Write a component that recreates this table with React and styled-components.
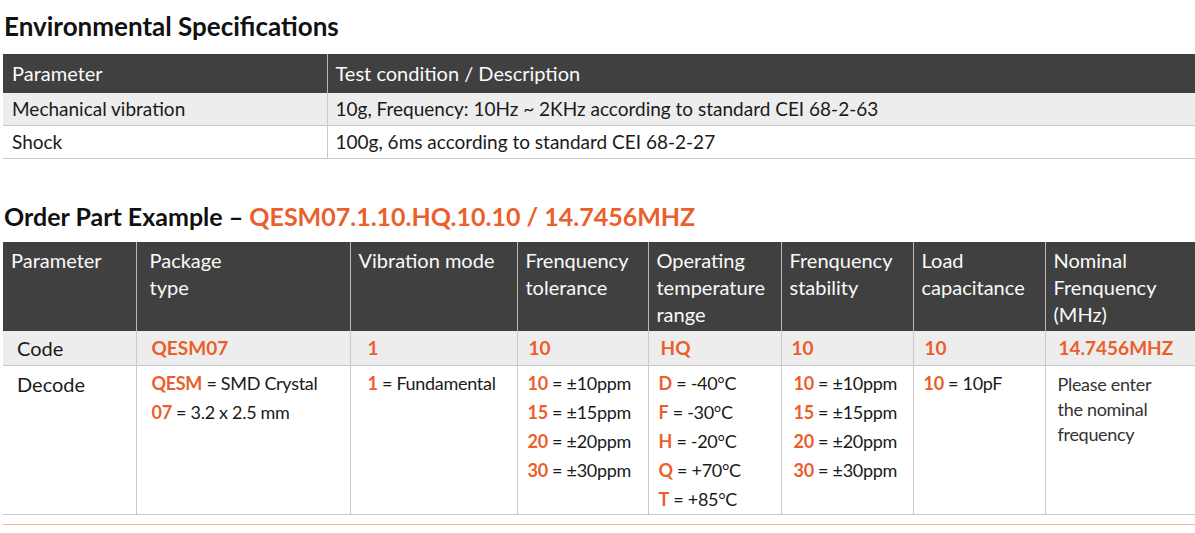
import styled, { createGlobalStyle } from "styled-components";

const GlobalStyle = createGlobalStyle`
  body {
    margin: 0;
    background: #ffffff;
    font-family: Lato, "Open Sans", sans-serif;
    color: #1a1a1a;
  }
`;

const Page = styled.div`
  padding: 9px 0 0 3px;
`;

const Title = styled.h2`
  margin: 0 0 ${({ $below }) => $below || 10}px 1px;
  font-size: ${({ $size }) => $size || 26}px;
  font-weight: 700;
  line-height: 34px;
  color: #111;
`;

const Accent = styled.span`
  color: #ea5f2b;
  font-weight: ${({ $bold }) => ($bold ? 700 : "inherit")};
`;

const Table = styled.table`
  width: 1192px;
  border-collapse: collapse;
  table-layout: fixed;
  margin-bottom: ${({ $gap }) => $gap || 0}px;
`;

const Head = styled.th`
  background: #404040;
  color: #fafafa;
  font-weight: 400;
  font-size: 20px;
  text-align: left;
  vertical-align: top;
  line-height: 27px;
  padding: ${({ $pad }) => $pad || "5px 8px 3px"};
  border-left: 1px solid #b8b8b8;
  &:first-child {
    border-left: none;
  }
`;

const Row = styled.tr`
  background: ${({ $shaded }) => ($shaded ? "#ededed" : "#ffffff")};
  border-bottom: 1px solid #c9c9c9;
`;

const Cell = styled.td`
  font-size: ${({ $size }) => $size || 19}px;
  line-height: ${({ $lh }) => $lh || 32}px;
  height: ${({ $h }) => $h || "auto"};
  padding: ${({ $pad }) => $pad || "0 8px"};
  vertical-align: top;
  color: #1a1a1a;
  font-weight: ${({ $bold }) => ($bold ? 700 : 400)};
  border-left: 1px solid #c9c9c9;
  &:first-child {
    border-left: none;
  }
`;

const Lines = styled.div`
  display: flex;
  flex-direction: column;
  font-size: 18px;
  line-height: 29px;
  letter-spacing: -0.3px;
  padding-top: 3px;
`;

const Note = styled.div`
  font-size: 18px;
  line-height: 25px;
  color: #333;
  letter-spacing: -0.3px;
  padding-top: 6px;
`;

const BottomRule = styled.div`
  width: 1192px;
  height: 1px;
  margin-top: 9px;
  background: #e9b79f;
`;

const envRows = [
  ["Mechanical vibration", "10g, Frequency: 10Hz ~ 2KHz according to standard CEI 68-2-63"],
  ["Shock", "100g, 6ms according to standard CEI 68-2-27"],
];

const cols = [
  { w: 133, head: "Parameter" },
  { w: 214, head: "Package\ntype", pad: "5px 8px 3px 13px" },
  { w: 167, head: "Vibration mode" },
  { w: 131, head: "Frenquency\ntolerance" },
  { w: 133, head: "Operating\ntemperature\nrange" },
  { w: 132, head: "Frenquency\nstability" },
  { w: 132, head: "Load\ncapacitance" },
  { w: 150, head: "Nominal\nFrenquency\n(MHz)" },
];

const codes = [
  { v: "QESM07", pad: "0 10px 0 15px" },
  { v: "1", pad: "0 10px 0 17px" },
  { v: "10", pad: "0 10px 0 11px" },
  { v: "HQ", pad: "0 10px 0 12px" },
  { v: "10", pad: "0 10px 0 10px" },
  { v: "10", pad: "0 10px 0 11px" },
  { v: "14.7456MHZ", pad: "0 8px 0 13px" },
];

const decodes = [
  { pad: "0 10px 0 15px", items: [["QESM", "SMD Crystal"], ["07", "3.2 x 2.5 mm"]] },
  { pad: "0 10px 0 17px", items: [["1", "Fundamental"]] },
  { pad: "0 8px 0 10px", items: [["10", "±10ppm"], ["15", "±15ppm"], ["20", "±20ppm"], ["30", "±30ppm"]] },
  { pad: "0 8px 0 10px", items: [["D", "-40°C"], ["F", " -30°C"], ["H", "-20°C"], ["Q", "+70°C"], ["T", "+85°C"]] },
  { pad: "0 8px 0 12px", items: [["10", "±10ppm"], ["15", "±15ppm"], ["20", "±20ppm"], ["30", "±30ppm"]] },
  { pad: "0 8px 0 10px", items: [["10", "10pF"]] },
];

function HeadText({ text }) {
  return text.split("\n").map((line, i) => <div key={i}>{line}</div>);
}

export default function App() {
  return (
    <Page>
      <GlobalStyle />
      <Title $below={11}>Environmental Specifications</Title>
      <Table $gap={40}>
        <colgroup>
          <col style={{ width: 324 }} />
          <col />
        </colgroup>
        <thead>
          <tr>
            <Head $pad="6px 9px">Parameter</Head>
            <Head $pad="6px 8px">Test condition / Description</Head>
          </tr>
        </thead>
        <tbody>
          {envRows.map(([p, d], i) => (
            <Row key={p} $shaded={i === 0}>
              <Cell $pad="0 9px">{p}</Cell>
              <Cell>{d}</Cell>
            </Row>
          ))}
        </tbody>
      </Table>

      <Title $size={25} $below={9}>
        Order Part Example – <Accent>QESM07.1.10.HQ.10.10 / 14.7456MHZ</Accent>
      </Title>
      <Table>
        <colgroup>
          {cols.map((c) => (
            <col key={c.head} style={{ width: c.w }} />
          ))}
        </colgroup>
        <thead>
          <tr>
            {cols.map((c) => (
              <Head key={c.head} $pad={c.pad}>
                <HeadText text={c.head} />
              </Head>
            ))}
          </tr>
        </thead>
        <tbody>
          <Row $shaded>
            <Cell $pad="1px 13px 0 14px" $size={20} $lh={33}>
              Code
            </Cell>
            {codes.map((c, i) => (
              <Cell key={i} $pad={c.pad} $size={19} $lh={34} $bold>
                <Accent>{c.v}</Accent>
              </Cell>
            ))}
          </Row>
          <Row>
            <Cell $pad="2px 13px 0 14px" $size={20} $h="146px">
              Decode
            </Cell>
            {decodes.map((d, i) => (
              <Cell key={i} $pad={d.pad}>
                <Lines>
                  {d.items.map(([k, v]) => (
                    <span key={k}>
                      <Accent $bold>{k}</Accent> ={v.startsWith(" ") ? "\u00a0" : " "}
                      {v.trim()}
                    </span>
                  ))}
                </Lines>
              </Cell>
            ))}
            <Cell $pad="0 10px 0 12px">
              <Note>
                Please enter
                <br />
                the nominal
                <br />
                frequency
              </Note>
            </Cell>
          </Row>
        </tbody>
      </Table>
      <BottomRule />
    </Page>
  );
}
